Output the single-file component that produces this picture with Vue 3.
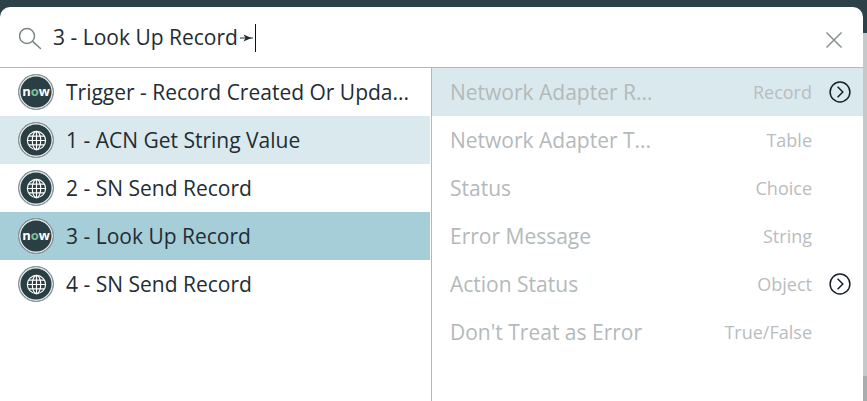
<script setup>
const left = [
  { icon: 'now', label: 'Trigger - Record Created Or Upda...', state: '' },
  { icon: 'globe', label: '1 - ACN Get String Value', state: 'soft' },
  { icon: 'globe', label: '2 - SN Send Record', state: '' },
  { icon: 'now', label: '3 - Look Up Record', state: 'strong' },
  { icon: 'globe', label: '4 - SN Send Record', state: '' },
]
const right = [
  { name: 'Network Adapter R...', type: 'Record', more: true, state: 'soft' },
  { name: 'Network Adapter T...', type: 'Table', more: false, state: '' },
  { name: 'Status', type: 'Choice', more: false, state: '' },
  { name: 'Error Message', type: 'String', more: false, state: '' },
  { name: 'Action Status', type: 'Object', more: true, state: '' },
  { name: "Don't Treat as Error", type: 'True/False', more: false, state: '' },
]
</script>

<template>
  <div class="page">
    <div class="topbar"></div>
    <div class="body">
      <div class="modal">
        <div class="search">
          <svg class="glass" width="24" height="24" viewBox="0 0 24 24" fill="none" stroke="#7d8585" stroke-width="1.5">
            <circle cx="8" cy="10" r="7.5" />
            <path d="M13.6 15.4 L21.5 22.5" stroke-linecap="round" />
          </svg>
          <span class="query">3 - Look Up Record</span>
          <svg class="pill" width="14" height="8" viewBox="0 0 14 8">
            <path d="M0 4 H13" stroke="#232c33" stroke-width="1" fill="none" />
            <path d="M3.5 0.5 L11.5 4 L3.5 7.5 L5.5 4 Z" fill="#232c33" />
          </svg>
          <span class="caret"></span>
          <svg class="close" width="18" height="18" viewBox="0 0 18 18" fill="none" stroke="#8a8f90" stroke-width="1.5">
            <path d="M1.5 1.5 L16.5 16.5 M16.5 1.5 L1.5 16.5" />
          </svg>
        </div>
        <div class="columns">
          <div class="col-left">
            <div v-for="item in left" :key="item.label" class="row" :class="item.state">
              <span class="badge">
                <span v-if="item.icon === 'now'" class="now">n<i>o</i>w</span>
                <svg v-else width="23" height="23" viewBox="0 0 24 24" fill="none" stroke="#fff" stroke-width="1.2">
                  <circle cx="12" cy="12" r="9.5" />
                  <ellipse cx="12" cy="12" rx="4.4" ry="9.5" />
                  <path d="M12 2.5 V21.5 M2.5 12 H21.5 M3.8 7.4 H20.2 M3.8 16.6 H20.2" />
                </svg>
              </span>
              <span class="label">{{ item.label }}</span>
            </div>
          </div>
          <div class="col-right">
            <div v-for="item in right" :key="item.name" class="row prop" :class="item.state">
              <span class="name">{{ item.name }}</span>
              <span class="type">{{ item.type }}</span>
              <span class="slot">
                <svg v-if="item.more" width="22" height="22" viewBox="0 0 22 22" fill="none" stroke="#17202a" stroke-width="1.5">
                  <circle cx="11" cy="11" r="9.9" />
                  <path d="M8.6 5.8 L13.8 11 L8.6 16.2" />
                </svg>
              </span>
            </div>
          </div>
        </div>
      </div>
      <div class="gutter"></div>
    </div>
  </div>
</template>

<style>
html, body { margin: 0; background: #fff; overflow: hidden; }
</style>

<style scoped>
.page {
  width: 867px;
  height: 401px;
  overflow: hidden;
  background: #2c4248;
  font-family: "Open Sans", sans-serif;
  display: flex;
  flex-direction: column;
}
.topbar { height: 7px; flex: none; }
.body { flex: 1; display: flex; min-height: 0; }
.modal {
  width: 863px;
  flex: none;
  background: #fff;
  border-radius: 10px 10px 0 0;
  display: flex;
  flex-direction: column;
}
.gutter {
  flex: 1;
  margin-top: 26px;
  background: linear-gradient(to bottom, #c6c9c9 0, #c6c9c9 343px, #a9adad 343px);
}
.search {
  height: 60px;
  flex: none;
  border-bottom: 1px solid #b4b8b8;
  display: flex;
  align-items: center;
  padding-left: 19px;
}
.glass { flex: none; margin-right: 10px; margin-top: 1px; }
.query { font-size: 21px; color: #232c33; line-height: 28px; }
.pill { flex: none; margin-left: 2px; margin-top: 2px; }
.caret { width: 1px; height: 28px; background: #111; flex: none; margin-left: 1px; margin-top: 1px; }
.close { margin-left: auto; margin-right: 20px; margin-top: 6px; }
.columns { flex: 1; display: flex; min-height: 0; }
.col-left { width: 430px; flex: none; padding-right: 1px; border-right: 1px solid #b4b8b8; }
.col-right { flex: 1; min-width: 0; }
.row { height: 48px; display: flex; align-items: center; }
.row.soft { background: #d9e9ee; }
.row.strong { background: #a6ced8; }
.col-left .row { padding-left: 18px; }
.badge {
  width: 34px;
  height: 34px;
  flex: none;
  border-radius: 50%;
  background: #2a3f44;
  border: 1px solid #8c989a;
  box-shadow: inset 0 0 0 1.5px #e3e8e9;
  margin-right: 12px;
  display: flex;
  align-items: center;
  justify-content: center;
}
.now { font-size: 13px; font-weight: 700; color: #fff; line-height: 1; margin-top: -1px; }
.now i { font-style: normal; color: #7fbf9f; }
.label { font-size: 21px; color: #232c33; white-space: nowrap; margin-top: -1px; }
.prop { padding-left: 18px; }
.name { font-size: 21px; color: #b4b9ba; white-space: nowrap; flex: 1; margin-top: -1px; }
.type { font-size: 18px; color: #b9bdbe; white-space: nowrap; margin-top: -1px; }
.slot { width: 22px; height: 22px; flex: none; margin-left: 17px; margin-right: 12px; }
</style>
